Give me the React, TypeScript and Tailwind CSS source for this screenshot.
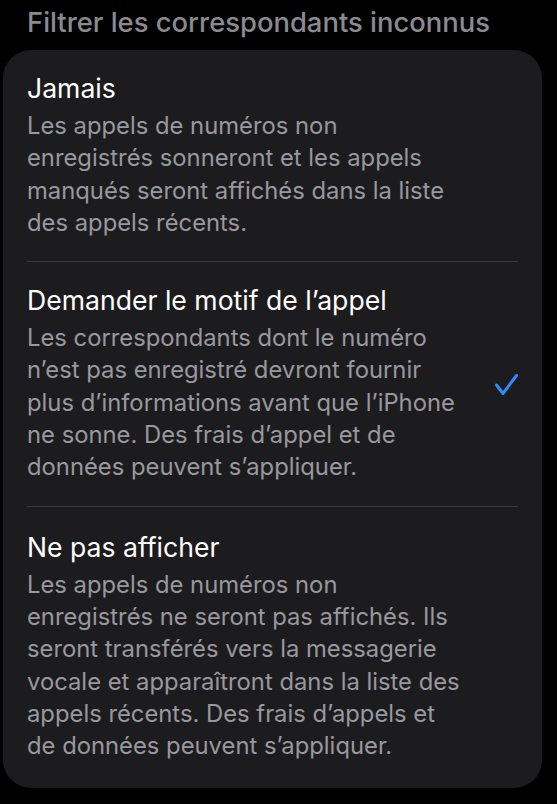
const options = [
  {
    title: "Jamais",
    lines: [
      "Les appels de numéros non",
      "enregistrés sonneront et les appels",
      "manqués seront affichés dans la liste",
      "des appels récents.",
    ],
    checked: false,
  },
  {
    title: "Demander le motif de l’appel",
    lines: [
      "Les correspondants dont le numéro",
      "n’est pas enregistré devront fournir",
      "plus d’informations avant que l’iPhone",
      "ne sonne. Des frais d’appel et de",
      "données peuvent s’appliquer.",
    ],
    checked: true,
  },
  {
    title: "Ne pas afficher",
    lines: [
      "Les appels de numéros non",
      "enregistrés ne seront pas affichés. Ils",
      "seront transférés vers la messagerie",
      "vocale et apparaîtront dans la liste des",
      "appels récents. Des frais d’appels et",
      "de données peuvent s’appliquer.",
    ],
    checked: false,
  },
];

export default function App() {
  return (
    <div
      className="min-h-[804px] w-[557px] bg-black overflow-hidden"
      style={{ fontFamily: "Inter, 'Noto Sans', sans-serif" }}
    >
      <h2 className="pl-[27px] pt-[6px] text-[27.4px] leading-[32px] font-medium text-[#8a8a8f] whitespace-nowrap">
        Filtrer les correspondants inconnus
      </h2>

      <div className="ml-[3px] mr-[15px] mt-[12px] rounded-[28px] bg-[#1c1c1e] pb-[4px]">
        {options.map((opt, i) => (
          <div key={opt.title} className="pl-[24px] pr-[24px]">
            <div
              className={`flex items-center ${
                i < options.length - 1 ? "py-[22px] border-b border-[#3a3a3d]" : "pt-[24px] pb-[22px]"
              }`}
            >
              <div className="flex-1 whitespace-nowrap">
                <div className="text-[26.6px] leading-[32px] text-white">{opt.title}</div>
                <div className="mt-[6px] text-[23.8px] leading-[32.3px] text-[#98989e]">
                  {opt.lines.map((l) => (
                    <div key={l}>{l}</div>
                  ))}
                </div>
              </div>
              {opt.checked && (
                <svg width="24" height="24" viewBox="0 0 24 24" className="shrink-0 mt-[2px]">
                  <path
                    d="M2.5 12 L9 20.5 L22.5 2.5"
                    fill="none"
                    stroke="#2f8cf6"
                    strokeWidth="3"
                    strokeLinecap="round"
                    strokeLinejoin="round"
                  />
                </svg>
              )}
            </div>
          </div>
        ))}
      </div>
    </div>
  );
}
